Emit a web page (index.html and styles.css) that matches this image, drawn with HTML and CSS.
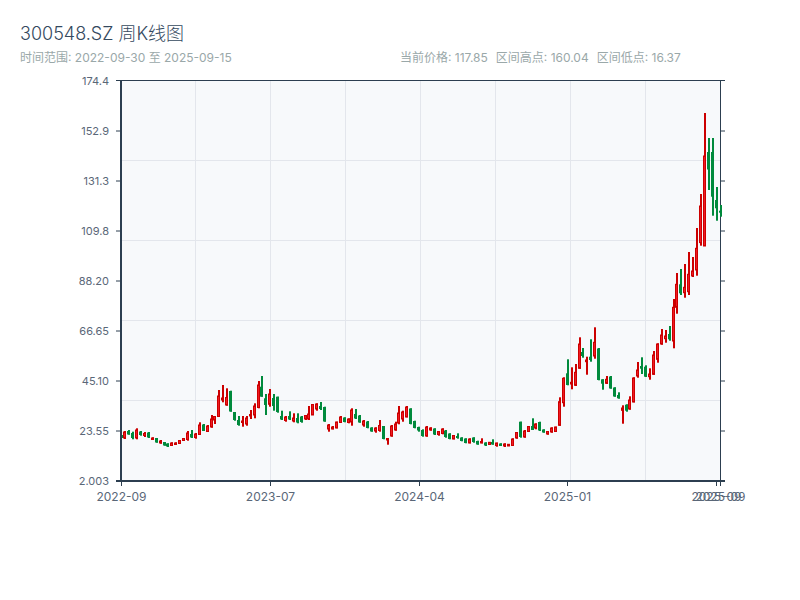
FILE: index.html
```html
<!DOCTYPE html>
<html lang="en">
<head>
  <meta charset="UTF-8">
  <title>300548.SZ 周K线图</title>
  <link rel="stylesheet" href="styles.css">
</head>
<body>
  <div class="header">
    <h1>300548.SZ 周K线图</h1>
    <div class="info">
      <div class="range">时间范围: 2022-09-30 至 2025-09-15</div>
      <div class="stats">
        <span>当前价格: 117.85</span>
        <span>区间高点: 160.04</span>
        <span>区间低点: 16.37</span>
      </div>
    </div>
  </div>
  <svg id="chart" class="chart" width="800" height="520" viewBox="0 64 800 520"></svg>
  <script src="chart.js"></script>
</body>
</html>
```

FILE: styles.css
```css
:root {
  --axis: #2c3e50;
  --title: #34495e;
  --muted: #9aa8a9;
  --label: #5a6778;
  --plot: #f7f9fb;
  --grid: #e3e6ec;
  --up: #cc0000;
  --up-fill: #f01a22;
  --down: #008a3c;
}
body {
  font-family: Inter, "Noto Sans CJK SC", sans-serif;
  background: #fff;
  margin: 0;
}
.header {
  height: 64px;
  padding: 0 20px;
  box-sizing: border-box;
}
h1 {
  margin: 0;
  padding-top: 23px;
  font-size: 18px;
  line-height: 22px;
  font-weight: 300;
  color: var(--title);
}
.info {
  display: flex;
  margin-top: 5px;
  font-size: 12px;
  line-height: 16px;
  color: var(--muted);
}
.range, .stats { width: 50%; }
.stats { display: flex; gap: 8px; }
.chart { display: block; }
.chart text {
  font-size: 11px;
  fill: var(--label);
}
.chart .x-label { font-size: 12px; }
.plot { fill: var(--plot); }
.grid { stroke: var(--grid); stroke-width: 1; }
.axis { stroke: var(--axis); stroke-width: 1; }
.axis-main { stroke: var(--axis); stroke-width: 2; }
.wick-up { fill: var(--up); }
.body-up { fill: var(--up-fill); stroke: var(--up); stroke-width: 1; }
.candle-down { fill: var(--down); }
```

FILE: chart.js
```js
// Weekly candles, already in pixel rows: [colour, high, body top, body bottom, low]
const candles = [
  ['g',435,435.5,437.5,438],['r',431,432,438,439],['g',430,431,434.5,434.7],['g',431.7,433,438,439.3],
  ['r',428.3,430,438,439.3],['g',431,431.5,435,435.7],['r',432,433.5,435.5,437],['g',432,432.5,437.5,438],
  ['r',437.3,438,439.5,439.7],['g',438,438,442.5,442.7],['r',440,441,443,443.7],['g',442,442,445.5,445.7],
  ['g',443.3,443.5,446.5,447],['r',442.3,443,445.5,446],['r',442.3,443,444.5,444.7],['r',440,440.5,443.5,443.7],
  ['r',438.3,438.5,440.5,440.7],['r',431,433,439.5,440.7],['g',430,434,437.5,438],['r',433,434,437.5,438.7],
  ['r',422.3,425,434.5,434.7],['g',424,424.5,431,431],['r',425,426,431.5,432],['r',415,419,427,427.7],
  ['r',416,416.5,420,424],['r',390,396,416.5,417],['r',385,398,400,402.3],['r',388.3,397.5,405,405.7],
  ['g',390.7,391,411.5,411.7],['g',412,412,420,420.7],['g',416,420,425,425.7],['r',416,421,422.5,426.7],
  ['r',416,418,424,425.7],['r',410,414.5,416,419],['r',403.3,406,415,418.3],['r',381,385,407.5,408.3],
  ['g',376,386.7,396.7,396.7],['g',394,398.3,405,415],['r',389,394,404.3,406.7],['g',394,398,406,410.7],
  ['g',396.7,396.7,412,412.7],['g',410.7,416,419.5,420],['r',416,417,420.5,421.7],['g',411.3,416,419.5,420],
  ['r',413.3,418,421,422.3],['g',413.3,418,422.5,423.3],['g',416,416.5,422,422.7],['r',415,415.5,419,420],
  ['r',406,414,419,420],['r',404,404.5,415,415],['r',403.3,404,409,410.7],['g',402,406,409,410],
  ['g',406.7,407,421.5,421.7],['r',424,425,429,431.7],['r',426,427,429,429.3],['r',421.7,422,428,428.3],
  ['r',416,417,422.5,422.7],['g',417.3,417.5,422,422.3],['r',418.3,419,422.5,423.3],['r',408.3,410,422,425.7],
  ['g',409,414,418.5,419],['g',415,415.5,422.5,422.7],['r',420,421,425,426.7],['g',421,421.5,428,428.3],
  ['g',427.3,427.5,431.5,431.7],['r',427.3,428,431,432.7],['r',420,425.5,430.5,431.7],['g',426,426,439,439.3],
  ['r',438.3,438.5,440,444.7],['r',425,426,436,436.7],['r',421.7,424,430,430.7],['r',406,413,423,424.3],
  ['r',410.7,412,419,421.7],['r',406,407,417,417.3],['g',408.3,408.5,424,424.3],['g',420.7,421,428,428.3],
  ['g',426.7,427,430.5,431.7],['g',429.3,430,436,436.7],['r',426,427,436,436.7],['r',427.3,428,430,430.7],
  ['g',428.3,428.5,434.5,435],['r',431,431.5,434.5,435.7],['r',428.3,429,433.5,434.3],['g',430,430.5,437,437.7],
  ['g',433.3,433.5,439,439.3],['r',435,435.5,439,439.3],['g',433.3,436,438,438.7],['g',437.3,437.5,441,441.3],
  ['g',438.3,438.5,443,443.3],['r',438.3,439,443,443.3],['g',437.3,437.5,442,442.7],['g',440.7,441,444.5,444.7],
  ['r',438.3,441.5,443,443.3],['g',442.3,442.5,445.5,446],['r',442,442.3,444.5,444.7],['g',439.3,442,444.5,444.7],
  ['r',442.7,443,445.5,446.7],['g',443.3,443.5,446,446],['r',443.3,444,446,447],['r',444,444.3,446,446],
  ['r',438.3,439,445.5,446],['r',432,432.5,438,438.7],['g',421.7,421.7,437,437.7],['r',430,431,437,437.7],
  ['r',426,426.5,431.5,432],['g',418.3,426,430,430],['r',423.3,424,428,429.3],['g',421.7,422,430.5,431],
  ['g',429.3,429.5,432.5,432.7],['r',431,431.5,434,434.7],['r',427.3,428,432,432.7],['r',426.7,427,431.5,432],
  ['r',397.3,401.7,425.3,425.7],['r',377.3,378.3,402.7,406.7],['g',359.3,373.3,385,385.3],['r',367.3,382.3,384,389.3],
  ['r',364,372.3,385.3,386],['r',337.3,344,368.3,368.7],['g',348,352,356,357.7],['r',356.7,360,361.7,374.7],
  ['g',339.3,356.7,360,361.7],['r',327.3,342.3,356,358.7],['g',348,348.5,380,380.3],['g',379.3,379.3,383.7,389.7],
  ['r',376,379.3,383.3,384],['g',376,376.5,388.5,388.7],['g',387.3,387.5,396.5,396.7],['g',392.3,395,398.3,398.7],
  ['r',405.3,408,410.3,423.7],['g',404.3,404.7,410.7,411.7],['r',396.3,400,409,409.7],['r',377.3,378,402,402.3],
  ['r',362,370,376,377.7],['g',357.3,366,368.7,374],['g',365.3,366.7,376.7,377],['r',368.3,374,376.7,379.7],
  ['r',351,355,374.3,374.7],['r',343.3,344,359.3,362.7],['r',329,335,344,344.7],['r',330,336,338.7,342.7],
  ['g',326,334,339.3,340.7],['r',299,307.3,341,348.3],['r',273,284.3,307.3,313.7],['g',269,284.3,293.3,295],
  ['r',264,287.3,292.7,297.7],['r',252,274.3,291.7,295],['r',257,271,276,277],['r',228,248.3,270,275.7],
  ['r',194,206,242.6,245.7],['r',113,156,246,246],['g',138,152,169.5,190],['g',138,152,196.7,215.7],
  ['g',187,200,208.3,220.7],['g',205,210.7,212.7,216.7]
];

const yLabels = ['174.4', '152.9', '131.3', '109.8', '88.20', '66.65', '45.10', '23.55', '2.003'];
const xLabels = [[0, '2022-09'], [38, '2023-07'], [76, '2024-04'], [114, '2025-01'], [152, '2025-09'], [153, '2025-09']];

const svg = document.getElementById('chart');
const left = 121, right = 720, top_ = 81, bottom = 481;
const step = (right - left) / (candles.length - 1);

function add(tag, attrs, text) {
  const el = document.createElementNS('http://www.w3.org/2000/svg', tag);
  for (const k in attrs) el.setAttribute(k, attrs[k]);
  if (text) el.textContent = text;
  svg.appendChild(el);
}

function line(x1, y1, x2, y2, cls) {
  add('line', { x1, y1, x2, y2, class: cls });
}

// Plot background and grid
add('rect', { x: left, y: top_, width: right - left, height: bottom - top_, class: 'plot' });
for (let i = 1; i < 8; i++) line(120.5 + i * 75, top_, 120.5 + i * 75, bottom, 'grid');
for (let i = 1; i < 5; i++) line(left, 80.5 + i * 80, right, 80.5 + i * 80, 'grid');

// Top and right axes
line(116, 80.5, 725, 80.5, 'axis');
line(720.5, 80, 720.5, 482, 'axis');

// Candles
candles.forEach((c, i) => {
  const x = Math.round(left + i * step - 0.5);
  const [col, high, bodyTop, bodyBottom, low] = c;
  if (col === 'r') {
    add('rect', { x: x, y: high, width: 2, height: low - high, class: 'wick-up' });
    add('rect', { x: x - 0.5, y: bodyTop, width: 2, height: bodyBottom - bodyTop, class: 'body-up' });
  } else {
    add('rect', { x: x, y: high, width: 2, height: low - high, class: 'candle-down' });
    add('rect', { x: x - 1, y: bodyTop, width: 3, height: bodyBottom - bodyTop, class: 'candle-down' });
  }
});

// Left and bottom axes, ticks and labels
line(121, 80, 121, 482, 'axis-main');
line(116, 481, 725, 481, 'axis-main');
yLabels.forEach((label, i) => {
  const y = 81 + i * 50;
  const tickY = i === 0 ? y - 0.5 : y;
  line(116, tickY, 121, tickY, 'axis');
  line(720, tickY, 725, tickY, 'axis');
  add('text', { x: 109, y: y + 4, 'text-anchor': 'end' }, label);
});
xLabels.forEach(([i, label]) => {
  const x = Math.round(left + i * step) + 0.5;
  line(x, 481, x, 486, 'axis');
  add('text', { x: x, y: 501, 'text-anchor': 'middle', class: 'x-label' }, label);
});
```
